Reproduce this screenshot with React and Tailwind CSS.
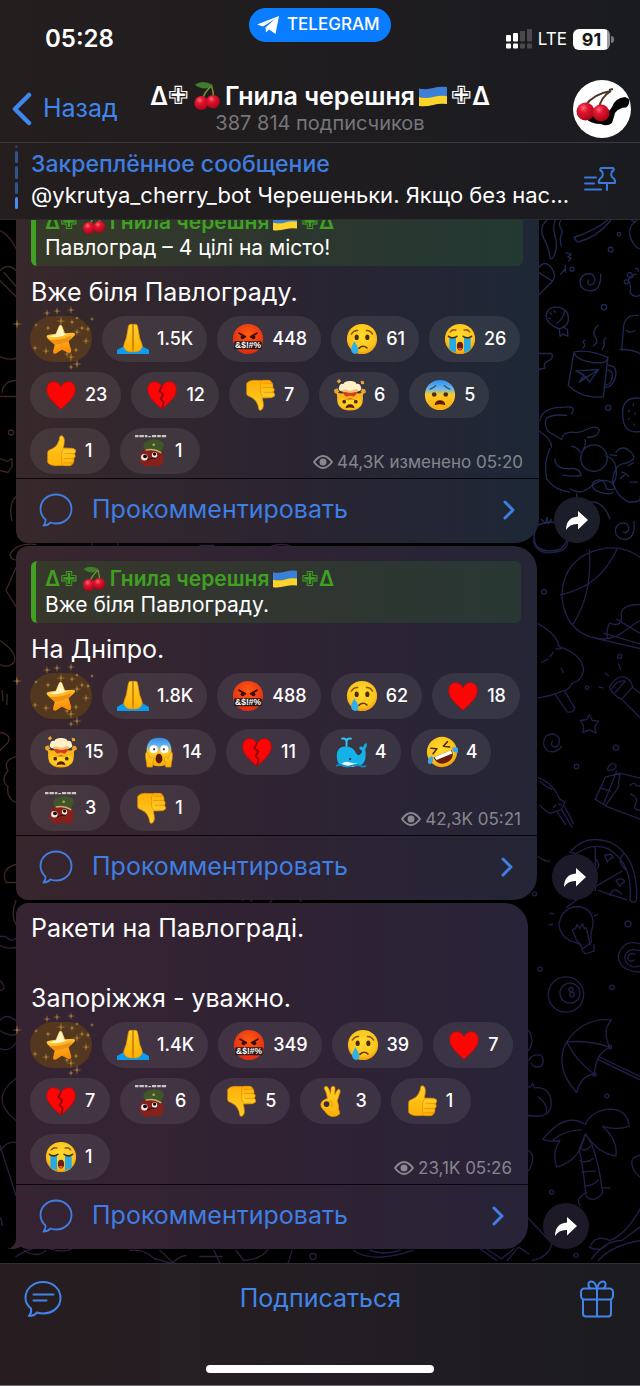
import React from "react";
import clsx from "clsx";

const MESSAGES = [
  {
    id: 1,
    quote: "Павлоград – 4 цілі на місто!",
    lines: ["Вже біля Павлограду."],
    views: "44,3K",
    time: "изменено 05:20",
    spacing: "pr-10",
    bubble: "from-[#37282a] via-[#2b2431] to-[#1d2736]",
    share: "bg-[#1b1d29]",
    reactions: [
      ["star"],
      ["pray", "1.5K"],
      ["rage", "448"],
      ["cry", "61"],
      ["sob", "26"],
      ["heart", "23"],
      ["broken", "12"],
      ["down", "7"],
      ["blown", "6"],
      ["fear", "5"],
      ["up", "1"],
      ["soldier", "1"],
    ],
  },
  {
    id: 2,
    quote: "Вже біля Павлограду.",
    lines: ["На Дніпро."],
    views: "42,3K",
    time: "05:21",
    spacing: "pr-[42px]",
    bubble: "from-[#38262d] via-[#2f2333] to-[#242536]",
    share: "bg-[#1c1a28]",
    reactions: [
      ["star"],
      ["pray", "1.8K"],
      ["rage", "488"],
      ["cry", "62"],
      ["heart", "18"],
      ["blown", "15"],
      ["scream", "14"],
      ["broken", "11"],
      ["whale", "4"],
      ["rofl", "4"],
      ["soldier", "3"],
      ["down", "1"],
    ],
  },
  {
    id: 3,
    lines: ["Ракети на Павлограді.", "", "Запоріжжя - уважно."],
    views: "23,1K",
    time: "05:26",
    spacing: "pr-[51px]",
    bubble: "from-[#362433] via-[#302233] to-[#282338]",
    share: "bg-[#1e1927]",
    reactions: [
      ["star"],
      ["pray", "1.4K"],
      ["rage", "349"],
      ["cry", "39"],
      ["heart", "7"],
      ["broken", "7"],
      ["soldier", "6"],
      ["down", "5"],
      ["ok", "3"],
      ["up", "1"],
      ["sob", "1"],
    ],
  },
];

const Defs = () => (
  <svg width="0" height="0" className="absolute" aria-hidden="true">
    <defs>
      <radialGradient id="face" cx="50%" cy="42%" r="58%">
        <stop offset="0" stopColor="#ffdc2e" />
        <stop offset="0.75" stopColor="#fdc51c" />
        <stop offset="1" stopColor="#ee9a10" />
      </radialGradient>
      <linearGradient id="hand" x1="0" y1="0" x2="0" y2="1">
        <stop offset="0" stopColor="#ffd028" />
        <stop offset="1" stopColor="#fdb005" />
      </linearGradient>
      <linearGradient id="blueFace" x1="0" y1="0" x2="0" y2="1">
        <stop offset="0" stopColor="#2a8ff0" />
        <stop offset="0.3" stopColor="#6fb6e6" />
        <stop offset="0.5" stopColor="#fdcb25" />
        <stop offset="1" stopColor="#f9a90f" />
      </linearGradient>
      <radialGradient id="rage" cx="50%" cy="35%" r="65%">
        <stop offset="0" stopColor="#ff5a14" />
        <stop offset="1" stopColor="#e02a10" />
      </radialGradient>
      <linearGradient id="star" x1="0" y1="0" x2="0.3" y2="1">
        <stop offset="0" stopColor="#fff0a0" />
        <stop offset="0.45" stopColor="#ffc42e" />
        <stop offset="1" stopColor="#f98c08" />
      </linearGradient>
      <radialGradient id="cherry" cx="38%" cy="30%" r="70%">
        <stop offset="0" stopColor="#ff6a78" />
        <stop offset="0.35" stopColor="#e3152f" />
        <stop offset="1" stopColor="#a80518" />
      </radialGradient>
    </defs>
  </svg>
);

const ThumbUp = () => (
  <g fill="url(#hand)" stroke="#e58c05" strokeWidth="0.8" strokeLinejoin="round">
    <path d="M3 20q0-3 3-3.500 6-2.500 8-6.500 2.500-4 2.500-7.500Q17 0 19.500 1q4 2.500 1 13.500l10 .5q3.500.5 3 4l-1.500 12q-.8 3-5 3L11 34.500q-6-.5-8-3.500z" />
    <path d="M21 15.500h10.500q3.500.4 3 3t-3 2.600q3 .6 2.500 3t-3.500 2.400q2.500.6 2 2.800t-3.500 2q2 .5 1.300 1.900T27 34.500h-6q-3-2-2.500-5t0-6.500 2.500-7.500z" />
    <path d="M22 21h9.500M21 26.500h9.500M21 31.300h8" fill="none" />
  </g>
);

const HeartShape = () => (
  <path
    d="M18 34C12 28 2 21 2 12 2 6 5.500 3 9.500 3 13.500 3 16.500 5.500 18 9c1.500-3.500 4.500-6 8.500-6C30.500 3 34 6 34 12c0 9-10 16-16 22z"
    fill="#fb0505"
    stroke="#c90808"
    strokeWidth="1"
  />
);

const EMOJI = {
  star: (
    <>
      <path
        d="M15.500 4Q17.500 0 19.500 4L22.500 11.500 31 11Q36 11.500 32.500 15L26.500 20.500 29.500 30.500Q29.500 35 26 33.500L19 30 12 34.500Q8.500 35 9.200 31.500L11 24.500 3 17.500Q0 13.800 4.500 13.200L12 12z"
        fill="url(#star)"
      />
      <path d="M4 18.500Q16 21 30 14L26.500 20.500Q18 24 11 24.500z" fill="#f08f10" />
      <path d="M16.500 4Q17.500 2 18.500 4L21.500 12 25 12.500Q16 18 4.500 15L12.500 13z" fill="#fff5c4" />
    </>
  ),
  pray: (
    <>
      <path d="M0 35v-4.500L9.500 25 18 31l8.500-6L36 30.500V35z" fill="#0b9cf0" />
      <path
        d="M17.700 1.500h-3q-1.500 0-2 3L10.500 17Q8 23 7.500 26q1 6 7 6.500h3.200zM18.300 1.500h3q1.500 0 2 3L25.500 17q2.500 6 3 9-1 6-7 6.500h-3.200z"
        fill="url(#hand)"
        stroke="#e58c05"
        strokeWidth="0.8"
      />
      <path d="M18 1.500V28" stroke="#cf7a06" strokeWidth="1" />
    </>
  ),
  rage: (
    <>
      <circle cx="18" cy="18" r="17" fill="url(#rage)" />
      <path d="M8 11.500l7 4M28 11.500l-7 4" stroke="#3a0d05" strokeWidth="2" strokeLinecap="round" />
      <circle cx="12" cy="16" r="2.300" fill="#3a0d05" />
      <circle cx="24" cy="16" r="2.300" fill="#3a0d05" />
      <rect x="2.500" y="20.500" width="31" height="9" rx="1.500" fill="#251a18" />
      <text x="18" y="28.500" fill="#fff" fontSize="9.500" fontWeight="700" textAnchor="middle" fontFamily="Liberation Sans, sans-serif">
        &amp;$!#%
      </text>
    </>
  ),
  cry: (
    <>
      <circle cx="18" cy="18" r="17" fill="url(#face)" />
      <path d="M6 12.500Q9 8 13 8.500M30 12.500Q27 8 23 8.500" fill="none" stroke="#8a5206" strokeWidth="1.600" strokeLinecap="round" />
      <ellipse cx="12" cy="16" rx="2.300" ry="3.200" fill="#50290a" />
      <ellipse cx="24" cy="16" rx="2.300" ry="3.200" fill="#50290a" />
      <path d="M14.500 28.500Q19 24 23.500 28" fill="none" stroke="#6b3305" strokeWidth="1.800" strokeLinecap="round" />
      <path d="M9.500 20.500Q5.500 27 5.800 30.500 6.500 35 10.500 34.800 14 34 13.800 30 13 25.500 9.500 20.500z" fill="#2fb0e8" />
    </>
  ),
  sob: (
    <>
      <circle cx="18" cy="18" r="17" fill="url(#face)" />
      <path d="M7 10Q10 6.500 13.500 8M29 10Q26 6.500 22.500 8" fill="none" stroke="#8a5206" strokeWidth="1.500" strokeLinecap="round" />
      <path d="M6 16.500h7.500v17Q9 32.500 6 29.500zM22.500 16.500H30v13Q27 32.500 22.500 33.500z" fill="#27a9e1" />
      <path d="M5 15Q9.500 18.500 14.500 15M21.500 15Q26.500 18.500 31 15" fill="none" stroke="#50290a" strokeWidth="1.800" strokeLinecap="round" />
      <path d="M14.500 26Q14.500 21 18 21t3.500 5-3.500 5-3.500-5z" fill="#6b1f08" />
      <path d="M15.500 29Q18 26.500 20.500 29 18 32 15.500 29z" fill="#f2553b" />
    </>
  ),
  heart: <HeartShape />,
  broken: (
    <>
      <HeartShape />
      <path d="M18 8l-3 5.500 4.500 4-3 5 3.500 4-2 7" fill="none" stroke="#8a0a12" strokeWidth="2" />
    </>
  ),
  down: (
    <g transform="translate(0 36) scale(1 -1)">
      <ThumbUp />
    </g>
  ),
  up: <ThumbUp />,
  blown: (
    <>
      <path d="M3.500 20h29q1 15.500-14.500 15.500T3.500 20z" fill="url(#face)" />
      <path d="M11 12h14l2 8-4 3H13l-4-3z" fill="#e0521f" />
      <path d="M3 15q5 2 7 1l3 3 5-2 5 2 3-3q2 1 7-1l-1 8-5-2-4 2-5-1.500-5 1.500-4-2-5 2z" fill="#fbb51c" />
      <path d="M11 17l3 3 4-1.500 4 1.500 3-3-1-3H12z" fill="#d0421a" />
      <path d="M7.500 13.500Q4 12 6 8.500 6.500 5 10.500 5.500 12.500 2 18 2.300q5.500-.3 7.500 3.200 4-.5 4.500 3 2 3.500-1.500 5-5 1.800-10.500 1.600T7.500 13.500z" fill="#fff0c8" />
      <path d="M8 13.500q4-2.500 7-1t7-.5 6 1.500q-5 2-10.500 1.600T8 13.500z" fill="#f0c070" />
      <path d="M3 2.500 6 0l2 2.500L5.500 5zM30 2l3.500.5.500 3-3.500.5zM0 12l3.500-1.500L6 14l-3 3-2.500-1.500zM31.500 11l3.500.5L36 15l-3 2-3-2z" fill="#eda42a" />
      <circle cx="11.500" cy="25.500" r="2.100" fill="#50290a" />
      <circle cx="24.500" cy="25.500" r="2.100" fill="#50290a" />
      <path d="M13 33Q13.500 28.500 18 28.500T23 33Q18 31 13 33z" fill="#5a1c08" />
    </>
  ),
  fear: (
    <>
      <circle cx="18" cy="18" r="17" fill="url(#blueFace)" />
      <path d="M7 11.500Q10.500 10.500 13 7.500M29 11.500Q25.500 10.500 23 7.500" fill="none" stroke="#1c4d88" strokeWidth="1.500" strokeLinecap="round" />
      <circle cx="11.500" cy="17.500" r="2.600" fill="#50290a" />
      <circle cx="24.500" cy="17.500" r="2.600" fill="#50290a" />
      <path d="M12 29.500Q12.500 24 18 24t6 5.500Q18 27.500 12 29.500z" fill="#5a1c08" />
    </>
  ),
  scream: (
    <>
      <path d="M18 2Q32 2 32 17 32 34 18 34T4 17Q4 2 18 2z" fill="url(#blueFace)" />
      <circle cx="12" cy="15" r="4.500" fill="#fff" />
      <circle cx="24" cy="15" r="4.500" fill="#fff" />
      <circle cx="12.500" cy="15" r="1.200" fill="#50290a" />
      <circle cx="23.500" cy="15" r="1.200" fill="#50290a" />
      <ellipse cx="18" cy="25.500" rx="3.800" ry="5.500" fill="#5a1c08" />
      <path d="M3 19q2-2 3.500 2l1 4 3-1q2 0 1.500 3l-1 3q.500 3-.5 5H4.500Q4 29 3 25zM33 19q-2-2-3.500 2l-1 4-3-1q-2 0-1.500 3l1 3q-.500 3 .5 5h6Q32 29 33 25z" fill="url(#hand)" stroke="#dd8a08" strokeWidth="0.7" />
    </>
  ),
  rofl: (
    <g transform="rotate(-22 18 18)">
      <circle cx="18" cy="18" r="17" fill="url(#face)" />
      <path d="M8 9.500l6 3L8 16M28 9.500l-6 3 6 3.500" fill="none" stroke="#50290a" strokeWidth="1.800" strokeLinecap="round" strokeLinejoin="round" />
      <path d="M7 20h22q0 11-11 11T7 20z" fill="#6b1f08" />
      <path d="M8 20h20v4H9z" fill="#fff" />
      <path d="M-1 23q1-5 7-5 1 5-3 7t-4-2zM37 23q-1-5-7-5-1 5 3 7t4-2z" fill="#3aa8e8" />
    </g>
  ),
  whale: (
    <>
      <path d="M2 22Q2 12 12 11.500 20 11.500 23.500 19q2.500 4.500 5.500 1 2-2 1-4-4-1-2-4 3-.5 3.500 1 1-4 4-5 1 3-1.500 6.500Q34.500 17 34.500 22 34.500 33 24 34H8Q2 32 2 22z" fill="#14b2e8" />
      <path d="M13 11V5M13 5.500Q12 2 8 3M13 5.500Q14 2 18 3" fill="none" stroke="#35c4f0" strokeWidth="2.200" strokeLinecap="round" />
      <path d="M7 31.500q4-3.500 9-2t9 1.500l-4 3.500H10z" fill="#e8f6fb" />
      <circle cx="17" cy="26" r="1.300" fill="#123" />
      <path d="M1 33.500q5-2 9 0t9 0 9 0 7 0" fill="none" stroke="#118cc0" strokeWidth="1.800" />
    </>
  ),
  ok: (
    <>
      <path
        d="M14 15Q13 8 10.500 4q0-3 2.500-2.500 2.500 1 4.500 9L18 4q.5-3 3-2.500Q23 2 22.500 6L22 11l3-5q1.500-2 3-.5 1 1.500-.5 4.500L25 18q2 5 1.500 9L28 32q-3 4-9 3.500-5-1-8-6-5-4-4.500-8T14 15z"
        fill="url(#hand)"
        stroke="#e58c05"
        strokeWidth="0.8"
      />
      <circle cx="13" cy="21.500" r="3.200" fill="#3a2c3d" />
      <path d="M17 17q4 3 2 8" fill="none" stroke="#e58c05" />
    </>
  ),
  soldier: (
    <>
      <path d="M0 0h4v2.500H0zM5 0h5v2.500H5zM11 0h3v2.500h-3zM15 1h3v1.500h-3zM19 0h5v2.500h-5zM25 0h4v2.500h-4zM30 0h5v2.500h-5z" fill="#c9c5c8" />
      <path d="M5 25Q7 16 14 17l13-1q6 4 5 12 0 4-3 6v2h-4l-1-1.500q-5 1-10 0v1.500h-4v-2Q4 31 5 25z" fill="#85201a" />
      <path d="M10 15Q8 9 13 7q8-4 15-1 5 2 4.500 6l-3.500 8Q21 15 12 17z" fill="#40562a" />
      <path d="M12 17Q21 14.500 29.500 20" stroke="#c8b068" strokeWidth="1.700" fill="none" />
      <circle cx="21" cy="11" r="1.500" fill="#b0a54c" />
      <circle cx="10.500" cy="25" r="3.600" fill="#f2eeec" />
      <circle cx="22" cy="22.500" r="3" fill="#f2eeec" />
      <circle cx="11.300" cy="24" r="2.200" fill="#1a0c0c" />
      <circle cx="22" cy="21.500" r="1.900" fill="#1a0c0c" />
      <path d="M14 28.500q5-4 9-2" stroke="#2a0808" strokeWidth="1.300" fill="none" />
    </>
  ),
};

const Emoji = ({ name, className }) => (
  <svg viewBox="0 0 36 36" className={className} aria-hidden="true">
    {EMOJI[name]}
  </svg>
);

const Cherries = ({ className }) => (
  <svg viewBox="0 0 28 32" className={className} aria-hidden="true">
    <path d="M19 5Q11 12 9 20M19 5q2 7 2 14" fill="none" stroke="#6a9a2c" strokeWidth="1.600" />
    <path d="M1 4Q9-2 20 4 12 12 1 4z" fill="#3f7d2c" />
    <circle cx="8" cy="23.500" r="7.500" fill="url(#cherry)" />
    <circle cx="20.500" cy="22" r="7.200" fill="url(#cherry)" />
  </svg>
);

const Flag = ({ className }) => (
  <svg viewBox="0 0 28 21" className={className} aria-hidden="true">
    <path d="M0 2.500Q7 4 14 2T28 1v9.500Q21 9.500 14 11.500T0 11z" fill="#3b7fd6" />
    <path d="M0 11q7 2 14 0t14-1V18q-7-1-14 1T0 20z" fill="#fbd32a" />
  </svg>
);

const ChannelName = ({ large }) => (
  <span className="flex items-center whitespace-nowrap">
    <span>Δ</span>
    <span className="font-['DejaVu_Sans',sans-serif] font-bold">✙</span>
    <Cherries className={large ? "ml-1 h-[30px] w-7" : "ml-1 h-[26px] w-6"} />
    <span className="ml-1">Гнила черешня</span>
    <Flag className={large ? "ml-1 h-[21px] w-7" : "ml-1 h-[18px] w-6"} />
    <span className="ml-1 font-['DejaVu_Sans',sans-serif] font-bold">✙</span>
    <span>Δ</span>
  </span>
);

const StatusBar = () => (
  <div className="grid h-[76px] grid-cols-[1fr_auto_1fr] items-start">
    <div className="pt-6 pl-[45px] text-2xl leading-[30px] font-semibold">05:28</div>
    <a
      href="#telegram"
      className="mt-2 flex h-[34px] w-[142px] items-center gap-2 rounded-full bg-[#0a7cff] pl-2 text-[17px] font-medium"
    >
      <svg viewBox="0 0 22 18" className="h-[18px] w-[22px]" aria-hidden="true">
        <path d="M0 8.500 22 0l-3.500 18-6.500-4.500-3 3-.5-5L18 3 6 10.500z" fill="#fff" />
      </svg>
      TELEGRAM
    </a>
    <div className="flex items-center justify-end gap-1.5 pt-6 pr-[26px] leading-[30px]">
      <svg viewBox="0 0 26 20" className="h-5 w-[26px]" aria-hidden="true">
        <g fill="#fff">
          <rect x="0" y="6" width="5" height="6.500" rx="1" />
          <rect x="7" y="4" width="5" height="8.500" rx="1" />
          <rect x="0" y="14.500" width="5" height="5" rx="1" />
          <rect x="7" y="14.500" width="5" height="5" rx="1" />
        </g>
        <g fill="#4a4a4e">
          <rect x="14" y="2" width="5" height="10.500" rx="1" />
          <rect x="21" y="0" width="5" height="12.500" rx="1" />
          <rect x="14" y="14.500" width="5" height="5" rx="1" />
          <rect x="21" y="14.500" width="5" height="5" rx="1" />
        </g>
      </svg>
      <span className="text-[17px]">LTE</span>
      <div className="flex items-center gap-px">
        <span className="h-[21px] w-[37px] rounded-md bg-linear-to-r from-white from-92% to-[#9a9a9e] to-92% text-center text-lg leading-[21px] font-bold text-[#17171b]">
          91
        </span>
        <span className="h-[7px] w-[3px] rounded-r bg-[#77777b]" />
      </div>
    </div>
  </div>
);

const Avatar = () => (
  <svg viewBox="0 0 58 58" className="size-[58px]" aria-hidden="true">
    <circle cx="29" cy="29" r="29" fill="#fff" />
    <path d="M12 38q10-3 22-6 3-1 5-5 3-9 13-10l4 2q1 6-3 8.500-7 0-11 5.500-1 4-3 10-5 4-11 1-10 0-16-6z" fill="#050505" />
    <path d="M12 26Q20 14 38 11M26 28Q28 17 38 11M36 10l4-1" fill="none" stroke="#4a3528" strokeWidth="2" />
    <circle cx="12.500" cy="31.500" r="9" fill="url(#cherry)" />
    <circle cx="28" cy="33" r="8.500" fill="url(#cherry)" />
  </svg>
);

const Header = () => (
  <header className="bg-linear-to-r from-[#241e1e] to-[#1a1b20]">
    <StatusBar />
    <div className="relative flex h-[67px] items-center justify-between border-b border-[#39393d] pr-[9px] pl-3">
      <button className="flex items-center gap-[11px] text-[25px] text-[#3f86f0]">
        <svg viewBox="0 0 20 34" className="h-[34px] w-5" fill="none" aria-hidden="true">
          <path d="M17 3 3 17l14 14" stroke="currentColor" strokeWidth="4.500" strokeLinecap="round" strokeLinejoin="round" />
        </svg>
        Назад
      </button>
      <div className="absolute inset-x-0 mx-auto mb-0.5 flex w-fit flex-col items-center">
        <h1 className="text-[25px] leading-[30px] font-semibold">
          <ChannelName large />
        </h1>
        <p className="text-xl leading-6 text-[#77767b]">387 814 подписчиков</p>
      </div>
      <button aria-label="Гнила черешня">
        <Avatar />
      </button>
    </div>
    <div className="flex h-[77px] items-stretch border-b border-[#2c2c30] pr-6 pl-[15px]">
      <div className="flex w-[3px] flex-col gap-[3px] pt-0.5 pb-2.5">
        <span className="h-[3px] rounded-full bg-[#2b3f63]" />
        <span className="flex-1 rounded-full bg-[#30548f]" />
        <span className="flex-1 rounded-full bg-[#30548f]" />
        <span className="flex-1 rounded-full bg-[#30548f]" />
        <span className="flex-1 rounded-full bg-[#4a8cf5]" />
      </div>
      <div className="min-w-0 flex-1 pt-1.5 pl-[13px] leading-[31px]">
        <p className="text-[23px] font-medium text-[#3f7ee0]">Закреплённое сообщение</p>
        <p className="truncate text-[22px]">@ykrutya_cherry_bot Черешеньки. Якщо без нас...</p>
      </div>
      <button className="mb-1 text-[#3b78dc]" aria-label="Закреплённые сообщения">
        <svg viewBox="0 0 32 26" className="h-[26px] w-8" fill="none" stroke="currentColor" strokeWidth="2" strokeLinecap="round" strokeLinejoin="round">
          <path d="M1 11.500h11M1 17.500h9M1 23.500h16M17 2h12q2 2-1 3.500-1.500 3 0 5.500 4 2.500 3 6H15q-1-3.500 3-6 1.500-2.500 0-5.500-3-1.500-1-3.500zM23 17v7" />
        </svg>
      </button>
    </div>
  </header>
);

// chat background, drawn in three scaled bands
const Wallpaper = () => (
  <svg
    viewBox="0 219 640 1044"
    preserveAspectRatio="xMidYMid slice"
    className="absolute inset-0 size-full"
    fill="none"
    strokeLinecap="round"
    strokeLinejoin="round"
    aria-hidden="true"
  >
    <g transform="translate(320 215) scale(0.3333)" stroke="#1f2850" strokeWidth="4">
      <path d="M680 15q-25 20-8 55t18 55M706 15q-10 15 0 50t-8 63q-10 4-8-5M722 15q-8 12 0 22t2 22 0 32M762 66q60-20 100-51M772 80q60-15 100-65M762 66l10 14" />
      <path d="M655 158q20-28 40 0t-8 50l-30 30M655 170l40 25M738 112l16 4-10 8 10 4-8 8M722 176l12-14M736 150v20" />
      <path d="M842 176q2 48-30 50-32-2-32-28 4-24 28-24 18 4 16 22-4 14-16 12-8-6-2-14" />
      <path d="M950 175q-20 5-25 20 10 12 5 35 10 18 30 10M925 172q8-5 12 6t-8 8-4-14zM946 160q8-4 10 8" />
      <circle cx="919" cy="199" r="6" />
      <path d="M718 340q-40-15-40-40 5-28 35-25 35 5 32 40-5 20-27 25zM718 340l2 22 8-6 16 6-2-20-14-10M735 285q-5 25-25 40M690 292l4 4M702 285l4 5M686 308l5 2" />
      <path d="M788 398q10-8 4-14t4-10M820 392q18-14 6-28t8-34M846 402q10-12 6-20t6-14" />
      <path d="M762 410 745 510q40 40 105 34l14-120M762 410q40-10 100 15 5 22-45 16-50-8-55-31zM866 450q28 0 20 38-12 32-34 26M864 464q20 4 10 34-6 10-16 10" />
      <path d="M768 466l68-4-28 38-10-16zM768 466l24 12-14 22 58-38M778 500l20-16" />
      <path d="M955 300q-45-5-45 45l-5 55M900 402q40 0 60 12M920 345q10 10 25 0" />
      <path d="M655 414h40q8 14-10 22t-10 22l-20 4" />
      <path d="M960 548q-50-5-52 40-2 70 52 60" />
      <path d="M940 565v5M925 585l4 4M945 592v5M925 612l4-4M942 625v5" />
      <path d="M755 595q15-25-20-20-70 0-75 40M740 600q-40-5-60 8-10 20 5 40l40 24q0-20 30-22 25 5 45-8 30-15 38 2-2 20-36 22M655 645q40 25 40 50M690 700q-20 40-10 90 25 35 70 40M705 730q0 30 40 30 35-5 38 20-30 5-55-2" />
      <circle cx="822" cy="728" r="40" />
      <path d="M795 672q5 15-5 30M755 692q20 5 25 18M858 722q25 5 30 35t-10 50M870 718q10 0 20 2M888 710q20-25 45 0t-25 35q-25 5-30 50 10 50 50 65 40 0 32-18M750 820q30 20 60-5 40-35 70-10 12 25-20 15-10-40-40-20-10 20 20 30t40 0M770 835q0 30 40 25t60 50M905 770q20 5 20 14M930 800h22M925 750l15-8M900 790l14-12" />
      <path d="M652 930q-20 40 0 65 30 20 70 5 25-20 22-55-30-40-92-15zM665 912l12 12 4-18 4 18 10-12" />
      <path d="M942 918q5 50-26 54-30-2-30-28 4-22 26-22 16 4 14 20-4 12-16 8" />
      <circle cx="872" cy="102" r="7" />
      <circle cx="756" cy="161" r="6" />
      <circle cx="852" cy="275" r="8" />
      <circle cx="865" cy="577" r="8" />
      <circle cx="897" cy="56" r="5" />
      <path d="M930 60q-5-30 20-45M930 60q10 35 30 40M935 15l10 5" />
    </g>
    <g transform="translate(320 540) scale(0.3333)" stroke="#211f4a" strokeWidth="4">
      <path d="M960 50Q890 0 800 40q-75 40-74 130 10 100 95 122l139 32M722 162Q840 140 892 24M808 28q10 130-48 222M815 290q40 12 80-5 40-30 65-45M862 292q-4-20 6-44 40 14 36-22-4-34 56-34M890 236l70 42M850 278l110 32" />
      <path d="M655 250q55 30 62 68 70 25 74 70-6 35-35 40-10 22-30 24-30 15-72 20M725 325l-18 0M700 335l-10 14M684 356l-20 10M724 384l6 12M704 460l38 54q20 4 22-12l-30-50" />
      <circle cx="672" cy="154" r="7" />
      <circle cx="899" cy="348" r="6" />
      <circle cx="801" cy="442" r="5" />
      <circle cx="888" cy="622" r="8" />
      <circle cx="770" cy="678" r="7" />
      <path d="M868 440q20-35 45-30 20 5 25 30L905 476q-25-10-37-36zM876 444q16-28 40-22l-30 34M938 440l25 20M905 476l55 55M896 370l6 18M856 398l10 8M838 440l12 2" />
      <path d="M808 522l9 18 19 2-12 16 4 20-20-10-19 8 2-20-10-16 20-3z" />
      <path d="M725 618q-20 24-44 12-20-22-2-44 26-14 38 8 6 22-12 26-16-4-8-18" />
      <path d="M856 710 826 776l30 20 104 40M856 710l44-12-6 44-38 54M840 742l32 10M900 698l60 15M862 688q8-28 26-14 2 18-26 14zM890 692q-5 15-40 100M930 735q15-14 18 0l12 2M932 760q25 12 15 30t13 20" />
      <path d="M655 712q35 12 55 45 5 20 25 28l-10 22-34 12q-20-10-30-25M660 722q20 20 36 24M735 800l26 50M724 806l32 54M710 812l26 40M700 800l8-6M715 790l8 4" />
      <path d="M750 935q45-55 120-30 85 40 80 175-10 10-20 0Q940 970 865 925q-50-20-95 15zM826 920v130M740 1100l90-64 76-44M835 1050l85 28M826 955q25 25-10 38M912 940q-25 20 8 50M870 1065q10-30 35-5M855 945q20-8 25 6-14 4-18 14zM888 1020q20-12 26 4-14 6-14 14z" />
      <path d="M655 948q15 14 34 14M640 0q10 40 50 36 50 0 54-34" />
      <circle cx="644" cy="1060" r="6" />
    </g>
    <g transform="translate(320 900) scale(0.3333)" stroke="#241d48" strokeWidth="4">
      <path d="M782 130q-62-10-65-60 10-52 60-52 45 8 42 56-10 30-4 50l-28 22zM757 88l12 30 16 22M757 88l10-4 4-12 8 12 8-14 6 14 6-2 12 52M786 148l10 12 26-8 0-20M690 38l12 2M688 72h10M832 42l-8 4" />
      <path d="M960 130q-50-15-65 35 0 45 65 50M960 150q-40-10-46 22 10 36 46 24M945 160q-20-5-22 14 8 14 20 4" />
      <circle cx="738" cy="282" r="53" />
      <circle cx="750" cy="278" r="30" />
      <circle cx="753" cy="267" r="6" />
      <circle cx="756" cy="282" r="7" />
      <circle cx="924" cy="70" r="9" />
      <circle cx="660" cy="206" r="6" />
      <circle cx="876" cy="261" r="7" />
      <circle cx="861" cy="586" r="6" />
      <circle cx="695" cy="875" r="6" />
      <path d="M770 576Q700 500 740 424 790 350 874 358q-30 35-4 82-45 20-46 82-40 0-54 54zM740 424q70-5 130 16M740 424q30 60 84 98M832 476l128 62M836 468l124 60" />
      <circle cx="870" cy="440" r="5" />
      <circle cx="824" cy="522" r="5" />
      <path d="M796 672q-60-40-128 45 20 8 52 3-25 35-10 80 70-20 86-100 40 60 92 66 5-50-40-88 40 12 80 0-5-52-60-52-55 5-72 46zM700 718q30-28 84-30M796 700l-18 46q15 80 20 140 20 25 50-8-10-90-34-150zM782 745q16 10 30-8M780 780q20 10 40-6M786 816q20-5 40-4M792 856q25 2 44-18M845 862h25" />
      <path d="M626 560q8 0 12-12l6 14q45-5 50 45 0 50-68 38M626 480q10-20 36-16 14 16 2 32-24 10-30-8M626 390q20 30 0 60M655 590q25 15 25 45M626 750q25 20 0 60M960 765q-40 5-15 50l15 15" />
      <path d="M626 955q20 20 70 75-10 40-60 50M480 1045l50 35M500 1045l44 30 38-30M626 1060l-30-20-34 40M780 915q-15-20 20-40M810 1040q15-40 60-20 50-20 90-95M815 1075q40-55 90-55l55-40M835 1080q40-45 125-60M808 1040q30 15 50-5" />
      <circle cx="768" cy="1064" r="6" />
      <path d="M100 1050q60 40 180 0M150 1050q40 15 90 0" />
    </g>
    <g stroke="#3f2622" strokeWidth="1.300">
      <path d="M0 230q10 5 16 18M0 270q8-8 16 0M0 280l16 16M4 272l12 14M0 356q8 4 16 2M2 392q2-12 14-12M0 396h16M0 458l7 3 5-3 0 8-4 6-8-2" />
      <circle cx="11" cy="432" r="2.500" />
      <path d="M16 496q-8 8-4 24M36 544q-20-2-26 10 2 8 10 4L6 590l10 16M0 640q18 12 14 22-6 6-14 2M2 690l1 10M7 694v10" />
      <path d="M0 732q12 2 8 10L0 750M16 756q-14 4-8 14-8 10 0 16-2 12 8 16M16 864q-16 4-10 18h10M16 900q-8 20 6 30" />
    </g>
    <g stroke="#2f1d39" strokeWidth="1.300">
      <path d="M0 936h6q4 6 10 2M0 945q6 4 16 2M0 980q8 8 0 10M0 1020q6-8 16 0M0 1030q8 6 16 4M0 1048q10 4 16-6M16 1078q-28 20 0 42M0 1145l16 50M0 1150q8-10 16-8M2 1225q0-6-2-8" />
      <path d="M16 1256q20-14 40-6 14 2 20-5M24 1250q12 8 22 0M130 1250q14-2 24 8l18 5q8-8 14-8M160 1250l14 13M214 1250l6 13M200 1256h22M236 1250l8 10q20-2 24-12M292 1250l-4 13" />
      <circle cx="313" cy="1256" r="3" />
      <path d="M92 543v3M118 543v3M200 545h14M270 546q12-4 22 0M242 900l6-3 4 4M270 902l4-5M300 901l4-4" />
    </g>
  </svg>
);

const SPARKLES = [
  [17, -3, 4], [27, -5, 4], [41, -6, 4], [47, 2, 2], [18, 12, 3], [6, 9, 2], [-13, 8, 5], [31, 5, 5],
  [42, 6, 3], [52, 12, 3], [58, 13, 3], [47, 16, 4], [56, 25, 4], [5, 32, 3], [16, 35, 4], [46, 34, 3],
  [41, 41, 5], [47, 48, 5], [41, 51, 3], [62, 3, 2], [37, 38, 3],
];

const Sparkles = () => (
  <svg viewBox="0 0 62 46" className="absolute inset-0 size-full overflow-visible" aria-hidden="true">
    {SPARKLES.map(([x, y, r], i) => (
      <path
        key={i}
        d={`M${x - r} ${y}L${x} ${y - 0.6}L${x + r} ${y}L${x} ${y + 0.6}ZM${x} ${y - r}L${x + 0.6} ${y}L${x} ${y + r}L${x - 0.6} ${y}Z`}
        fill="#c9993f"
      />
    ))}
  </svg>
);

const Reaction = ({ name, count }) => (
  <button
    aria-label={name}
    className={clsx(
      "relative flex h-[46px] items-center gap-[7px] rounded-full px-3.5 text-lg font-medium",
      count ? "min-w-20 bg-white/8" : "bg-[#54371f]"
    )}
  >
    <Emoji name={name} className="mx-px size-8" />
    {count}
    {!count && <Sparkles />}
  </button>
);

const Message = ({ message, last }) => (
  <article className={clsx("flex items-end gap-[15px] pl-4", message.spacing)}>
    <div className="relative min-w-0 flex-1">
      {last && (
        <svg viewBox="0 0 20 14" className="absolute bottom-0 -left-2 h-3.5 w-5" aria-hidden="true">
          <path d="M8 0v4q0 7-8 10 8 1 14-3l6-11z" fill="#362433" />
        </svg>
      )}
      <div className={clsx("relative rounded-l-xl rounded-r-3xl bg-linear-to-r", message.bubble)}>
        <div className={message.quote ? "pt-[15px]" : "pt-[7px]"}>
          {message.quote && (
            <blockquote className="mr-4 mb-2 ml-[15px] rounded-md border-l-[5px] border-[#3fa021] bg-[#3fa021]/15 py-[5px] pl-[9px] text-[21px] leading-[26px]">
              <div className="font-semibold text-[#3fa021]">
                <ChannelName />
              </div>
              <p>{message.quote}</p>
            </blockquote>
          )}
          <div className="px-[15px] pt-px text-[25px] leading-[35px]">
            {message.lines.map((line, i) => (
              <p key={i} className="min-h-[35px]">
                {line}
              </p>
            ))}
          </div>
          <div className="flex flex-wrap gap-2.5 pt-1.5 pr-3 pb-1 pl-3.5">
            {message.reactions.map(([name, count]) => (
              <Reaction key={name} name={name} count={count} />
            ))}
            <div className="mr-1 ml-auto flex items-center gap-1 self-end text-[17px] leading-6 text-white/45">
              <svg viewBox="0 0 20 14" className="h-3.5 w-5" fill="none" stroke="currentColor" strokeWidth="2" aria-hidden="true">
                <path d="M1 7q9-12 18 0-9 12-18 0z" />
                <circle cx="10" cy="7" r="3.500" fill="currentColor" stroke="none" />
              </svg>
              {message.views} {message.time}
            </div>
          </div>
        </div>
        <button className="flex h-[65px] w-full items-center border-t border-black/80 pr-6 pb-0.5 pl-[23px] text-[25px] text-[#3f7fe2]">
          <svg viewBox="0 0 34 34" className="size-[34px]" fill="none" aria-hidden="true">
            <path
              d="M17 1.500C26 1.500 32.500 8 32.500 16S26 30.500 17 30.500q-3 0-5.500-1-3 3-7 3 2.500-3 2-6Q1.500 22 1.500 16C1.500 8 8 1.500 17 1.500z"
              stroke="currentColor"
              strokeWidth="1.800"
              strokeLinejoin="round"
            />
          </svg>
          <span className="flex-1 pl-[19px] text-left">Прокомментировать</span>
          <svg viewBox="0 0 12 20" className="h-5 w-3" fill="none" aria-hidden="true">
            <path d="M2 2l8 8-8 8" stroke="currentColor" strokeWidth="3" strokeLinecap="round" strokeLinejoin="round" />
          </svg>
        </button>
      </div>
    </div>
    <button
      aria-label="Поделиться"
      className={clsx("flex size-[46px] shrink-0 items-center justify-center rounded-full", message.share)}
    >
      <svg viewBox="0 0 22 19" className="h-[19px] w-[22px]" aria-hidden="true">
        <path d="M12 0l10 9-10 9.500v-5.500Q4 12.500 0 19 0 6.500 12 5.500z" fill="#fff" />
      </svg>
    </button>
  </article>
);

const Footer = () => (
  <footer className="flex flex-col justify-between border-t border-b border-t-[#303034] border-b-[#6b686c] bg-linear-to-r from-[#271d20] via-[#231e23] to-[#1b1b20]">
    <div className="flex h-[70px] items-center justify-between pr-[25px] pl-6 text-[#4285ea]">
      <button aria-label="Сообщения">
        <svg viewBox="0 0 38 38" className="size-[38px]" fill="none" stroke="currentColor" strokeWidth="2" strokeLinecap="round" strokeLinejoin="round">
          <path d="M19 2C29 2 36.500 9 36.500 18S29 33.500 19 33.500q-3 0-6-1-3 3.500-8 3.500 3-3.500 2-7.500Q1.500 24 1.500 18C1.500 9 9 2 19 2zM9.500 14.500h20M9.500 20.500h13" />
        </svg>
      </button>
      <button className="text-[25px]">Подписаться</button>
      <button aria-label="Подарок">
        <svg viewBox="0 0 36 38" className="h-[38px] w-9" fill="none" stroke="currentColor" strokeWidth="2" strokeLinejoin="round">
          <rect x="2" y="8.500" width="32" height="11" rx="3.500" />
          <path d="M4 19.500v14q0 3 3 3h22q3 0 3-3v-14M18 8.500v28M18 8.500Q16 1.500 12.500 1.500t-3 3.500 2.500 3.500M18 8.500q2-7 5.500-7t3 3.500-2.500 3.500" />
        </svg>
      </button>
    </div>
    <div className="flex h-[51px] items-end justify-center pb-3">
      <span className="h-2 w-[228px] rounded-full bg-white" />
    </div>
  </footer>
);

const App = () => {
  return (
    <div className="flex h-screen flex-col overflow-hidden bg-black font-[Inter,'Noto_Sans',sans-serif] text-white">
      <Defs />
      <Header />
      <main className="relative flex min-h-0 flex-1 flex-col justify-end overflow-hidden">
        <Wallpaper />
        <div className="relative flex flex-col gap-[3px] pb-3.5">
          {MESSAGES.map((message, i) => (
            <Message key={message.id} message={message} last={i === MESSAGES.length - 1} />
          ))}
        </div>
      </main>
      <Footer />
    </div>
  );
};

export default App;
